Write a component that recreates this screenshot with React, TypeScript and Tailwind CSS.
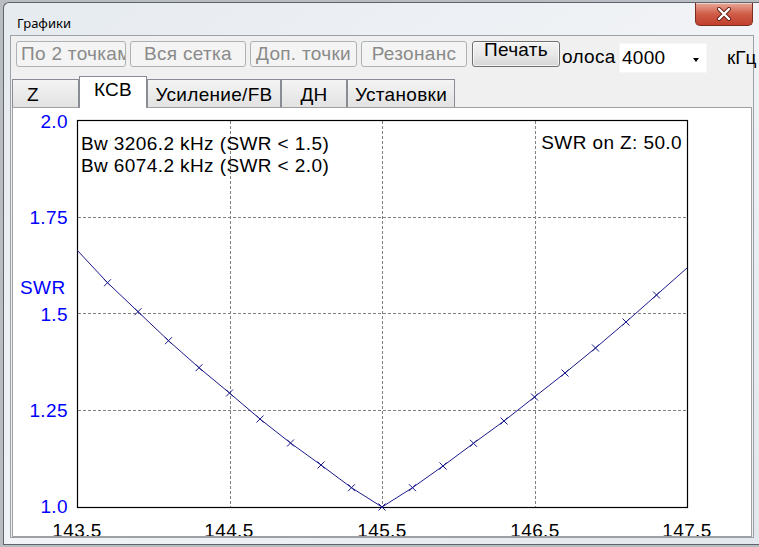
import React from "react";

const leftYs = [250, 282.7, 311.7, 340.7, 367.7, 393, 419, 443, 465, 487.7, 507];
const rightYs = [487.7, 466, 443.3, 421, 397, 373, 348, 322, 295, 268];
const ys = [...leftYs, ...rightYs];
const pts = ys.map((y, i) => [77 + i * 30.5, y] as [number, number]);

function DisabledBtn({ label, w, left }: { label: string; w: string; left?: boolean }) {
  return (
    <div
      className={`${w} h-[26px] shrink-0 overflow-hidden whitespace-nowrap rounded-[3px] border border-[#adb2b5] bg-[#f4f4f4] pt-[4px] text-[19px] leading-[15px] tracking-[0.3px] text-[#8a8a8a] flex ${
        left ? "justify-start pl-[4px]" : "justify-center"
      }`}
    >
      {label}
    </div>
  );
}

function Tab({ label, w, selected, left }: { label: string; w: string; selected?: boolean; left?: boolean }) {
  if (selected) {
    return (
      <div
        className={`${w} relative z-10 -mb-px h-[32px] shrink-0 border-t border-l border-r border-[#898c95] bg-white pt-[3px] text-[19px] leading-[19px] tracking-[0.3px] text-black flex justify-center`}
      >
        {label}
      </div>
    );
  }
  return (
    <div
      className={`${w} h-[28px] shrink-0 border-t border-l border-r border-[#898c95] bg-gradient-to-b from-[#f4f4f4] to-[#e2e2e2] pt-[5px] text-[19px] leading-[19px] tracking-[0.3px] text-black flex ${
        left ? "justify-start pl-[14px]" : "justify-center"
      }`}
    >
      {label}
    </div>
  );
}

function Chart() {
  const gridV = [230.5, 382.5, 535.5];
  const gridH = [217.5, 313.5, 410.5];
  const yLabels: [string, number][] = [
    ["2.0", 127.5],
    ["1.75", 223.5],
    ["1.5", 320.5],
    ["1.25", 417],
    ["1.0", 513],
  ];
  const xLabels: [string, number][] = [
    ["143.5", 77],
    ["144.5", 229],
    ["145.5", 382],
    ["146.5", 535],
    ["147.5", 687],
  ];
  const font = "'Liberation Sans', Arial, sans-serif";
  const ls = 0.4;
  return (
    <svg
      className="absolute left-0 top-0"
      width={738}
      height={428}
      viewBox="13 108 738 428"
      fontFamily={font}
    >
      {gridV.map((x) => (
        <line key={x} x1={x} y1={121} x2={x} y2={507} stroke="#808080" strokeWidth={1} strokeDasharray="3 2" />
      ))}
      {gridH.map((y) => (
        <line key={y} x1={78} y1={y} x2={687} y2={y} stroke="#808080" strokeWidth={1} strokeDasharray="3 2" />
      ))}
      <rect x={77.5} y={120.5} width={610} height={387} fill="none" stroke="#000" strokeWidth={1.2} />
      <polyline
        points={pts.map((p) => p.join(",")).join(" ")}
        fill="none"
        stroke="#1a1a8c"
        strokeWidth={1}
      />
      {pts.slice(1, 20).map(([x, y], i) => (
        <g key={i} stroke="#1a1a8c" strokeWidth={1}>
          <line x1={x - 3.5} y1={y - 3.5} x2={x + 3.5} y2={y + 3.5} />
          <line x1={x - 3.5} y1={y + 3.5} x2={x + 3.5} y2={y - 3.5} />
        </g>
      ))}
      {yLabels.map(([t, b]) => (
        <text key={t} x={68} y={b} textAnchor="end" fontSize={19} letterSpacing={ls} fill="#0000ff">
          {t}
        </text>
      ))}
      <text x={20} y={294} fontSize={19} letterSpacing={ls} fill="#0000ff">
        SWR
      </text>
      {xLabels.map(([t, x]) => (
        <text key={t} x={x} y={536.5} textAnchor="middle" fontSize={19} letterSpacing={ls} fill="#000">
          {t}
        </text>
      ))}
      <text x={81} y={149.5} fontSize={19} letterSpacing={ls} fill="#000">
        Bw 3206.2 kHz (SWR &lt; 1.5)
      </text>
      <text x={81} y={171.5} fontSize={19} letterSpacing={ls} fill="#000">
        Bw 6074.2 kHz (SWR &lt; 2.0)
      </text>
      <text x={682} y={148.5} textAnchor="end" fontSize={19} letterSpacing={ls} fill="#000">
        SWR on Z: 50.0
      </text>
    </svg>
  );
}

export default function App() {
  return (
    <div className="relative h-[547px] w-[759px] overflow-hidden bg-[#b9bdc2] font-['Liberation_Sans',Arial,sans-serif]">
      <div className="ml-[3px] mt-[2px] flex h-[543px] w-[762px] flex-col rounded-t-[6px] border-t border-l border-b border-[#5d646c] bg-gradient-to-br from-[#e6ebf0] via-[#f1f3f6] to-[#e2e7ed]">
        {/* title bar */}
        <div className="flex h-[32px] shrink-0 items-start">
          <div className="w-[110px] shrink-0 pl-[13px] pt-[14px] font-['Noto_Sans',sans-serif] text-[13px] leading-[13px] text-black">
            Графики
          </div>
          <div className="ml-[581px] flex h-[23px] w-[58px] shrink-0 items-center justify-center rounded-b-[5px] border border-t-0 border-[#7a2b22] bg-gradient-to-b from-[#e8a898] via-[#cf5c48] to-[#c0402c] shadow-[inset_0_1px_0_rgba(255,255,255,0.5)]">
            <svg width="18" height="14" viewBox="0 0 18 14">
              <path d="M4 2 L14 12 M14 2 L4 12" stroke="#5a1a12" strokeWidth="4" strokeLinecap="round" />
              <path d="M4 2 L14 12 M14 2 L4 12" stroke="#ffffff" strokeWidth="2.4" strokeLinecap="round" />
            </svg>
          </div>
        </div>
        {/* client */}
        <div className="ml-[6px] flex h-[503px] w-[744px] flex-col border border-[#9ba1a8] bg-[#f0f0f0]">
          {/* toolbar */}
          <div className="flex h-[31px] shrink-0 items-start pl-[5px] pt-[5px] text-[19px] leading-[15px]">
            <DisabledBtn label="По 2 точкам" w="w-[110px]" left />
            <div className="w-[4px] shrink-0" />
            <DisabledBtn label="Вся сетка" w="w-[116px]" />
            <div className="w-[4px] shrink-0" />
            <DisabledBtn label="Доп. точки" w="w-[107px]" />
            <div className="w-[4px] shrink-0" />
            <DisabledBtn label="Резонанс" w="w-[106px]" />
            <div className="w-[5px] shrink-0" />
            <div className="flex h-[26px] w-[88px] shrink-0 justify-center rounded-[3px] border border-[#707070] bg-gradient-to-b from-[#f3f3f3] via-[#e9e9e9] to-[#d5d5d5] pt-0 tracking-[0.3px] text-black shadow-[inset_0_0_0_1px_rgba(255,255,255,0.7)]">
              Печать
            </div>
            <div className="ml-[2px] mt-[8px] w-[57px] shrink-0 whitespace-nowrap tracking-[0.3px] text-black">олоса</div>
            <div className="relative mt-[2px] h-[30px] w-[88px] shrink-0 border border-[#f6f6f6] bg-white pl-[2px] pt-[6px] tracking-[0.3px] text-black">
              4000
              <div className="absolute right-[7px] top-[14px] h-0 w-0 border-l-[3.5px] border-r-[3.5px] border-t-[4px] border-l-transparent border-r-transparent border-t-black" />
            </div>
            <div className="ml-[20px] mt-[9px] shrink-0 whitespace-nowrap text-black">кГц</div>
          </div>
          {/* tabs */}
          <div className="ml-px mt-[9px] flex h-[31px] shrink-0 items-end">
            <Tab label="Z" w="w-[67px]" left />
            <Tab label="КСВ" w="w-[68px]" selected />
            <Tab label="Усиление/FB" w="w-[134px]" />
            <Tab label="ДН" w="w-[66px]" />
            <Tab label="Установки" w="w-[108px]" />
          </div>
          {/* sheet */}
          <div className="relative mx-px h-[430px] shrink-0 overflow-hidden border border-[#a0a0a0] bg-white">
            <Chart />
          </div>
        </div>
      </div>
    </div>
  );
}
